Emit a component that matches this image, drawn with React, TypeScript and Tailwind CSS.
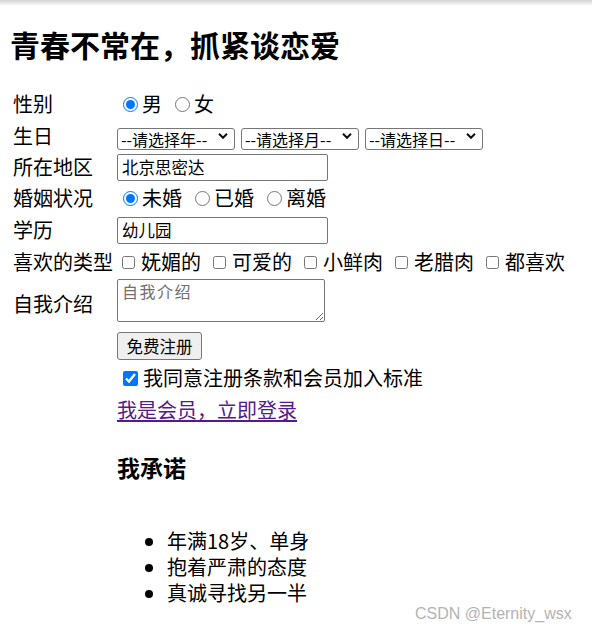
import { useState } from "react";

const Chevron = () => (
  <svg width="10" height="7" viewBox="0 0 10 7" className="absolute right-[7px] top-1/2 -translate-y-1/2 pointer-events-none">
    <path d="M1 1.3 L5 5.3 L9 1.3" fill="none" stroke="#111" strokeWidth="2" />
  </svg>
);

const Select = ({ label }: { label: string }) => (
  <div className="relative w-[118px] h-[22px]">
    <select className="appearance-none w-full h-full border border-[#767676] rounded-[3px] bg-white pl-[3px] pr-[18px] text-[16px] leading-[20px] text-black">
      <option>{label}</option>
    </select>
    <Chevron />
  </div>
);

const Row = ({ label, h = "h-[32px]", children }: { label: string; h?: string; children?: React.ReactNode }) => (
  <div className={`flex ${h}`}>
    <div className="w-[104px] flex items-center">{label}</div>
    <div className="flex-1 flex items-center">{children}</div>
  </div>
);

const App = () => {
  const [sexo, setSexo] = useState("男");
  const [hunyin, setHunyin] = useState("未婚");
  const [agree, setAgree] = useState(true);

  return (
    <div className="relative w-[592px] h-[633px] bg-white text-black text-[20px] leading-[26px] font-[Noto_Sans_CJK_SC,sans-serif] overflow-hidden">
      {/* barra de sombra no topo */}
      <div className="h-[6px] bg-gradient-to-b from-[#d2d2d2] to-white" />

      <h2 className="mt-[18px] h-[40px] leading-[40px] pl-[10px] text-[30px] font-bold">青春不常在，抓紧谈恋爱</h2>

      {/* formulário */}
      <div className="mt-[24px] pl-[13px]">
        <Row label="性别">
          {["男", "女"].map((s) => (
            <label key={s} className="flex items-center mr-[7px]">
              <input type="radio" name="sex" checked={sexo === s} onChange={() => setSexo(s)} className="ml-[6px] mr-[4px] w-[15px] h-[15px] accent-[#0075ff]" />
              {s}
            </label>
          ))}
        </Row>
        <Row label="生日">
          <div className="flex gap-[6px]">
            <Select label="--请选择年--" />
            <Select label="--请选择月--" />
            <Select label="--请选择日--" />
          </div>
        </Row>
        <Row label="所在地区" h="h-[30px]">
          <input defaultValue="北京思密达" className="w-[211px] h-[27px] border border-[#767676] rounded-[2px] px-[4px] text-[16.5px]" />
        </Row>
        <Row label="婚姻状况">
          {["未婚", "已婚", "离婚"].map((s) => (
            <label key={s} className="flex items-center mr-[7px]">
              <input type="radio" name="hunyin" checked={hunyin === s} onChange={() => setHunyin(s)} className="ml-[6px] mr-[4px] w-[15px] h-[15px] accent-[#0075ff]" />
              {s}
            </label>
          ))}
        </Row>
        <Row label="学历">
          <input defaultValue="幼儿园" className="w-[211px] h-[27px] border border-[#767676] rounded-[2px] px-[4px] text-[16.5px]" />
        </Row>
        <Row label="喜欢的类型">
          {["妩媚的", "可爱的", "小鲜肉", "老腊肉", "都喜欢"].map((s) => (
            <label key={s} className="flex items-center mr-[7px] whitespace-nowrap">
              <input type="checkbox" className="ml-[5px] mr-[6px] w-[13px] h-[13px] accent-[#0075ff]" />
              {s}
            </label>
          ))}
        </Row>
        <div className="flex h-[52px]">
          <div className="w-[104px] flex items-center">自我介绍</div>
          <div className="flex-1 pt-[1px]">
            <textarea
              placeholder="自我介绍"
              className="block w-[208px] h-[43px] border border-[#767676] rounded-[2px] px-[4px] py-[1px] text-[16px] leading-[20px] tracking-[1.5px] placeholder:text-[#6f6f6f] resize-y"
            />
          </div>
        </div>
        <Row label="">
          <button className="w-[85px] h-[28px] bg-[#efefef] border border-[#767676] rounded-[3px] text-[16.5px] leading-[20px]">免费注册</button>
        </Row>
        <Row label="">
          <label className="flex items-center">
            <input type="checkbox" checked={agree} onChange={(e) => setAgree(e.target.checked)} className="ml-[6px] mr-[5px] w-[15px] h-[15px] accent-[#0075ff]" />
            我同意注册条款和会员加入标准
          </label>
        </Row>
        <Row label="">
          <a href="#" className="text-[#551a8b] underline underline-offset-[2px]">我是会员，立即登录</a>
        </Row>

        {/* compromisso */}
        <div className="pl-[104px]">
          <h3 className="mt-[26px] h-[30px] leading-[30px] text-[23px] font-bold">我承诺</h3>
          <ul className="mt-[46px] pl-[50px] list-disc">
            <li className="leading-[26px]">年满18岁、单身</li>
            <li className="leading-[26px]">抱着严肃的态度</li>
            <li className="leading-[26px]">真诚寻找另一半</li>
          </ul>
        </div>
      </div>

      <div className="absolute left-[415px] top-[604px] text-[16px] leading-[20px] text-[#b3b3b3] font-[Liberation_Sans,sans-serif]">CSDN @Eternity_wsx</div>
    </div>
  );
};

export default App;
